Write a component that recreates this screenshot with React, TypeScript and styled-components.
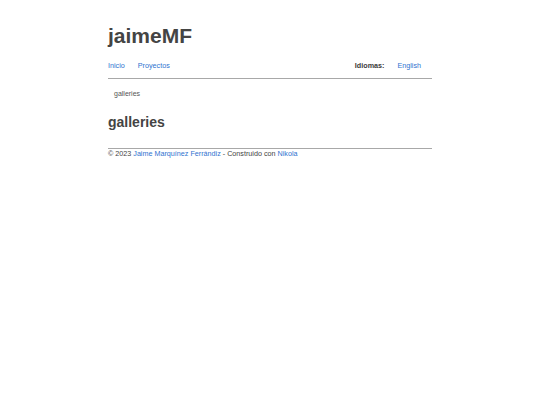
import styled, { createGlobalStyle } from 'styled-components';

const GlobalStyle = createGlobalStyle`
  body {
    margin: 0;
    background: #ffffff;
    font-family: "Liberation Sans", Arial, sans-serif;
    color: #444444;
  }
`;

const Page = styled.div`
  width: 60%;
  margin: 0 auto;
  padding-top: 22px;
`;

const SiteTitle = styled.h1`
  margin: 0;
  font-size: 21px;
  line-height: 28px;
  font-weight: bold;
  color: #444444;
`;

const Nav = styled.nav`
  display: flex;
  justify-content: space-between;
  align-items: center;
  margin-top: 11px;
  padding: 0 11px 8px 0;
  border-bottom: 1px solid #a8a8a8;
  font-size: 7.2px;
`;

const NavGroup = styled.div`
  display: flex;
  align-items: center;
  gap: 13px;
`;

const A = styled.a`
  color: #2f73cf;
  text-decoration: none;
`;

const Label = styled.span`
  font-weight: bold;
  color: #3a3a3a;
`;

const Crumbs = styled.div`
  font-size: 7px;
  color: #555555;
  margin: 11px 0 0 6px;
`;

const Heading = styled.h2`
  margin: 16px 0 0;
  font-size: 14px;
  line-height: 18px;
  font-weight: bold;
  color: #444444;
`;

const Footer = styled.footer`
  margin-top: 17px;
  border-top: 1px solid #a8a8a8;
  padding-top: 0;
  font-size: 7.2px;
  color: #444444;
`;

export default function App() {
  return (
    <>
      <GlobalStyle />
      <Page>
        <SiteTitle>jaimeMF</SiteTitle>
        <Nav>
          <NavGroup>
            <A href="#">Inicio</A>
            <A href="#">Proyectos</A>
          </NavGroup>
          <NavGroup>
            <Label>Idiomas:</Label>
            <A href="#">English</A>
          </NavGroup>
        </Nav>
        <Crumbs>galleries</Crumbs>
        <Heading>galleries</Heading>
        <Footer>
          © 2023 <A href="#">Jaime Marquínez Ferrándiz</A> - Construido con <A href="#">Nikola</A>
        </Footer>
      </Page>
    </>
  );
}
